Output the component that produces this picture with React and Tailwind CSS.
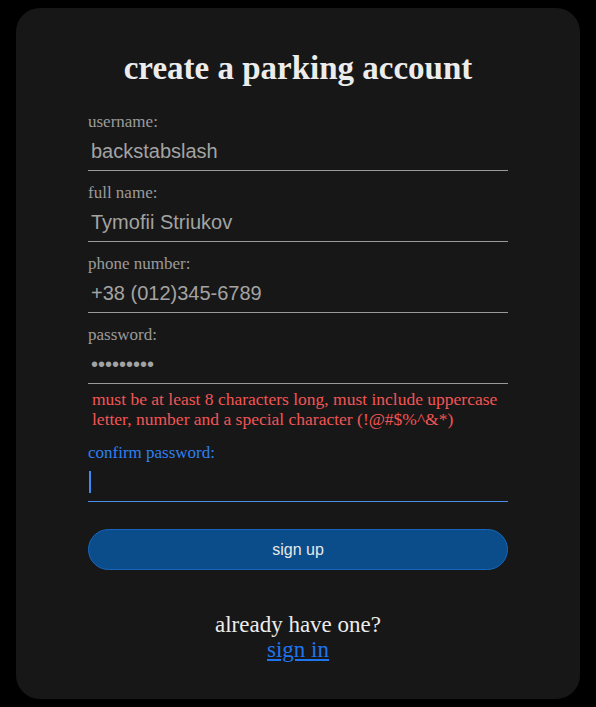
import React from 'react';

const serif = { fontFamily: '"Liberation Serif", "Times New Roman", serif' };
const sans = { fontFamily: '"Liberation Sans", Arial, sans-serif' };

const Field = ({ label, value, type = 'text' }) => (
  <div className="flex flex-col">
    <label className="text-[17px] leading-5 text-[#9b9b9b]" style={serif}>{label}</label>
    <input
      type={type}
      readOnly
      value={value}
      className="h-[39px] w-full bg-transparent border-b border-[#9a9a9a] px-[3px] text-[20px] text-[#a3a3a3] outline-none"
      style={sans}
    />
  </div>
);

const App = () => {
  return (
    <div className="min-h-[707px] w-full bg-black pt-2 px-4">
      <div className="h-[691px] rounded-[24px] bg-[#171717] px-[72px] pt-[42px] flex flex-col">
        <h1 className="text-center text-[33px] leading-9 font-bold text-[#ececec]" style={serif}>
          create a parking account
        </h1>

        <div className="mt-[26px] flex flex-col gap-3">
          <Field label="username:" value="backstabslash" />
          <Field label="full name:" value="Tymofii Striukov" />
          <Field label="phone number:" value="+38 (012)345-6789" />
          <Field label="password:" value="123456789" type="password" />
        </div>

        <p className="mt-[5px] pl-1 text-[17.5px] leading-5 text-[#f25555]" style={serif}>
          must be at least 8 characters long, must include uppercase letter, number and a special character (!@#$%^&amp;*)
        </p>

        <div className="mt-[14px] flex flex-col">
          <label className="text-[17px] leading-5 text-[#2f7ff0]" style={serif}>confirm password:</label>
          <div className="h-[39px] w-full border-b border-[#4a8fe8] flex items-center pl-[1px]">
            <span className="block h-[22px] w-[2px] bg-[#3d8af2]" />
          </div>
        </div>

        <button
          className="mt-[27px] h-[41px] w-full rounded-full bg-[#0b4d8a] border border-[#1766bd] text-[16px] text-[#e8e8e8]"
          style={sans}
        >
          sign up
        </button>

        <div className="mt-[42px] flex flex-col items-center text-[23px] leading-[25px]" style={serif}>
          <span className="text-[#ececec]">already have one?</span>
          <a href="#" className="text-[#1f74f0] underline">sign in</a>
        </div>
      </div>
    </div>
  );
};

export default App;
